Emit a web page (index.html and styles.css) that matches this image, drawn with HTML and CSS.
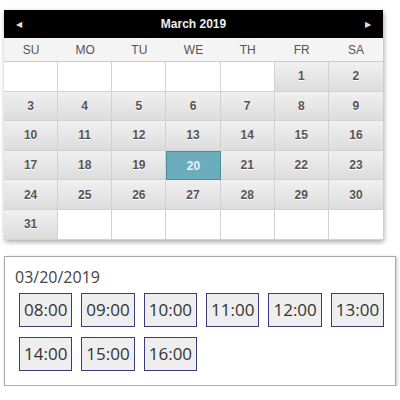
FILE: index.html
```html
<!DOCTYPE html>
<html>
<head>
  <title>Booking</title>
  <link rel="stylesheet" href="styles.css">
</head>
<body>
  <div class="calendar">
    <div class="cal-header">
      <span class="arrow">&#9664;</span>
      <span class="title">March 2019</span>
      <span class="arrow">&#9654;</span>
    </div>
    <div class="days">
      <div>SU</div><div>MO</div><div>TU</div><div>WE</div><div>TH</div><div>FR</div><div>SA</div>
    </div>
    <div class="dates">
      <div class="cell empty"></div><div class="cell empty"></div><div class="cell empty"></div>
      <div class="cell empty"></div><div class="cell empty"></div>
      <div class="cell">1</div><div class="cell">2</div>
      <div class="cell">3</div><div class="cell">4</div><div class="cell">5</div><div class="cell">6</div>
      <div class="cell">7</div><div class="cell">8</div><div class="cell">9</div>
      <div class="cell">10</div><div class="cell">11</div><div class="cell">12</div><div class="cell">13</div>
      <div class="cell">14</div><div class="cell">15</div><div class="cell">16</div>
      <div class="cell">17</div><div class="cell">18</div><div class="cell">19</div><div class="cell selected">20</div>
      <div class="cell">21</div><div class="cell">22</div><div class="cell">23</div>
      <div class="cell">24</div><div class="cell">25</div><div class="cell">26</div><div class="cell">27</div>
      <div class="cell">28</div><div class="cell">29</div><div class="cell">30</div>
      <div class="cell">31</div><div class="cell empty"></div><div class="cell empty"></div>
      <div class="cell empty"></div><div class="cell empty"></div><div class="cell empty"></div>
      <div class="cell empty"></div>
    </div>
  </div>

  <div class="slots">
    <div class="slot-date">03/20/2019</div>
    <div class="slot-list">
      <button class="slot">08:00</button>
      <button class="slot">09:00</button>
      <button class="slot">10:00</button>
      <button class="slot">11:00</button>
      <button class="slot">12:00</button>
      <button class="slot">13:00</button>
      <button class="slot">14:00</button>
      <button class="slot">15:00</button>
      <button class="slot">16:00</button>
    </div>
  </div>
</body>
</html>
```

FILE: styles.css
```css
body {
  margin: 0;
  padding: 0;
  background-color: #fff;
  font-family: "Liberation Sans", Arial, sans-serif;
}

/* Calendar */
.calendar {
  width: 379px;
  margin: 10px 0 0 4px;
  box-shadow: 1px 2px 5px rgba(0, 0, 0, 0.35);
}

.cal-header {
  height: 28px;
  background-color: #000;
  color: #eee;
  display: flex;
  align-items: center;
  justify-content: space-between;
  padding: 0 12px;
}

.cal-header .title {
  font-size: 12px;
  font-weight: bold;
}

.cal-header .arrow {
  font-size: 8px;
  color: #ddd;
}

.days {
  display: grid;
  grid-template-columns: repeat(7, 1fr);
  height: 23px;
  background-color: #f4f4f4;
  border-bottom: 1px solid #ccc;
}

.days div {
  display: flex;
  align-items: center;
  justify-content: center;
  font-size: 12px;
  color: #555;
}

.dates {
  display: grid;
  grid-template-columns: repeat(7, 1fr);
  grid-auto-rows: 29.6px;
}

.cell {
  display: flex;
  align-items: center;
  justify-content: center;
  font-size: 12px;
  font-weight: bold;
  color: #555;
  text-shadow: 0 1px 0 #fff;
  background: linear-gradient(#f0f0f0, #dcdcdc);
  border-right: 1px solid #d2d2d2;
  border-bottom: 1px solid #d2d2d2;
}

.cell:nth-child(7n) {
  border-right: none;
}

.cell.empty {
  background: #fff;
}

.cell.selected {
  background: #6badbd;
  border: 1px solid #4f8c9a;
  color: #eef;
  text-shadow: none;
}

/* Time slots */
.slots {
  margin: 16px 0 0 4px;
  width: 392px;
  height: 130px;
  border: 1px solid #a8a8a8;
  box-shadow: 1px 1px 3px rgba(0, 0, 0, 0.25);
  padding: 0 0 0 10px;
  box-sizing: border-box;
}

.slot-date {
  font-family: "Open Sans", sans-serif;
  font-size: 16px;
  color: #444;
  margin-top: 9px;
  line-height: 22px;
}

.slot-list {
  display: flex;
  flex-wrap: wrap;
  gap: 10px 9px;
  margin: 5px 0 0 4px;
}

.slot {
  font-family: "Open Sans", sans-serif;
  font-size: 17px;
  color: #333;
  background-color: #eee;
  border: 1px solid #3c3c7c;
  height: 34px;
  padding: 0 4px;
  border-radius: 0;
}
```
